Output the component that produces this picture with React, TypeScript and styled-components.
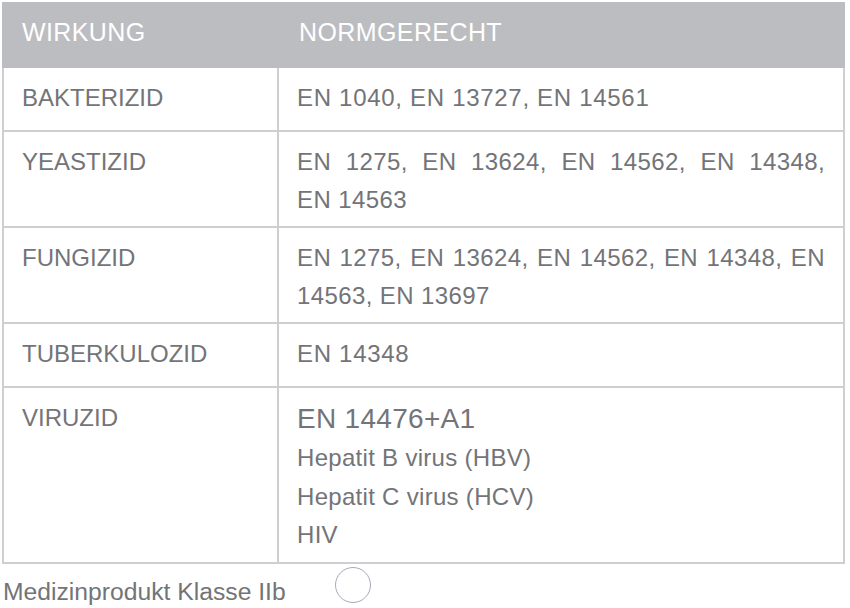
import React from "react";
import styled, { createGlobalStyle } from "styled-components";

const Global = createGlobalStyle`
  html, body { margin: 0; padding: 0; background: #ffffff; }
  body { font-family: "Liberation Sans", Arial, sans-serif; }
`;

const Page = styled.div`
  padding: 2px 0 0 2px;
  width: 843px;
`;

const Table = styled.table`
  width: 843px;
  border-collapse: separate;
  border-spacing: 0;
  table-layout: fixed;
  font-family: "Liberation Sans", Arial, sans-serif;
  color: #737478;
`;

const HeadCell = styled.th`
  background: #bcbdc0;
  color: #ffffff;
  font-weight: 400;
  font-size: 25px;
  line-height: 38px;
  letter-spacing: 0.4px;
  text-align: left;
  padding: 11px 19px 17px 20px;
  height: 38px;
`;

const Cell = styled.td<{ $first?: boolean; $justify?: boolean; $digits?: boolean }>`
  vertical-align: top;
  font-size: 24px;
  line-height: 38px;
  height: 44px;
  letter-spacing: ${(p) => (p.$justify ? "0.4px" : p.$digits ? "0.7px" : "0")};
  padding: 11px 18px 7px 18px;
  border-bottom: 2px solid #cfcfd1;
  border-right: 2px solid #cfcfd1;
  border-left: ${(p) => (p.$first ? "2px solid #cfcfd1" : "none")};
  text-align: ${(p) => (p.$justify ? "justify" : "left")};
`;

const Big = styled.div`
  font-size: 28px;
  line-height: 40px;
  letter-spacing: 0.3px;
`;

const Line = styled.div`
  line-height: 38.5px;
  letter-spacing: 0.3px;
`;

const Footer = styled.div`
  display: flex;
  align-items: flex-start;
  gap: 49px;
  padding-left: 1px;
  font-family: "Liberation Sans", Arial, sans-serif;
  color: #737478;
`;

const FooterLabel = styled.div`
  font-size: 24.7px;
  line-height: 38px;
  padding-top: 9px;
`;

const Circle = styled.div`
  width: 34px;
  height: 34px;
  border-radius: 50%;
  border: 1.5px solid #a9a8b6;
  margin-top: 3px;
`;

const rows: { label: string; value: string; justify?: boolean }[] = [
  { label: "BAKTERIZID", value: "EN 1040, EN 13727, EN 14561" },
  {
    label: "YEASTIZID",
    value: "EN 1275, EN 13624, EN 14562, EN 14348, EN\u00A014563",
    justify: true,
  },
  {
    label: "FUNGIZID",
    value: "EN 1275, EN 13624, EN 14562, EN 14348, EN 14563, EN 13697",
    justify: true,
  },
  { label: "TUBERKULOZID", value: "EN 14348" },
];

export default function App() {
  return (
    <>
      <Global />
      <Page>
        <Table>
          <colgroup>
            <col style={{ width: 277 }} />
            <col />
          </colgroup>
          <thead>
            <tr>
              <HeadCell>WIRKUNG</HeadCell>
              <HeadCell>NORMGERECHT</HeadCell>
            </tr>
          </thead>
          <tbody>
            {rows.map((r) => (
              <tr key={r.label}>
                <Cell $first>{r.label}</Cell>
                <Cell $justify={r.justify} $digits>
                  {r.value}
                </Cell>
              </tr>
            ))}
            <tr>
              <Cell $first>VIRUZID</Cell>
              <Cell>
                <Big>EN 14476+A1</Big>
                <Line>Hepatit B virus (HBV)</Line>
                <Line>Hepatit C virus (HCV)</Line>
                <Line>HIV</Line>
              </Cell>
            </tr>
          </tbody>
        </Table>
        <Footer>
          <FooterLabel>Medizinprodukt Klasse IIb</FooterLabel>
          <Circle />
        </Footer>
      </Page>
    </>
  );
}
